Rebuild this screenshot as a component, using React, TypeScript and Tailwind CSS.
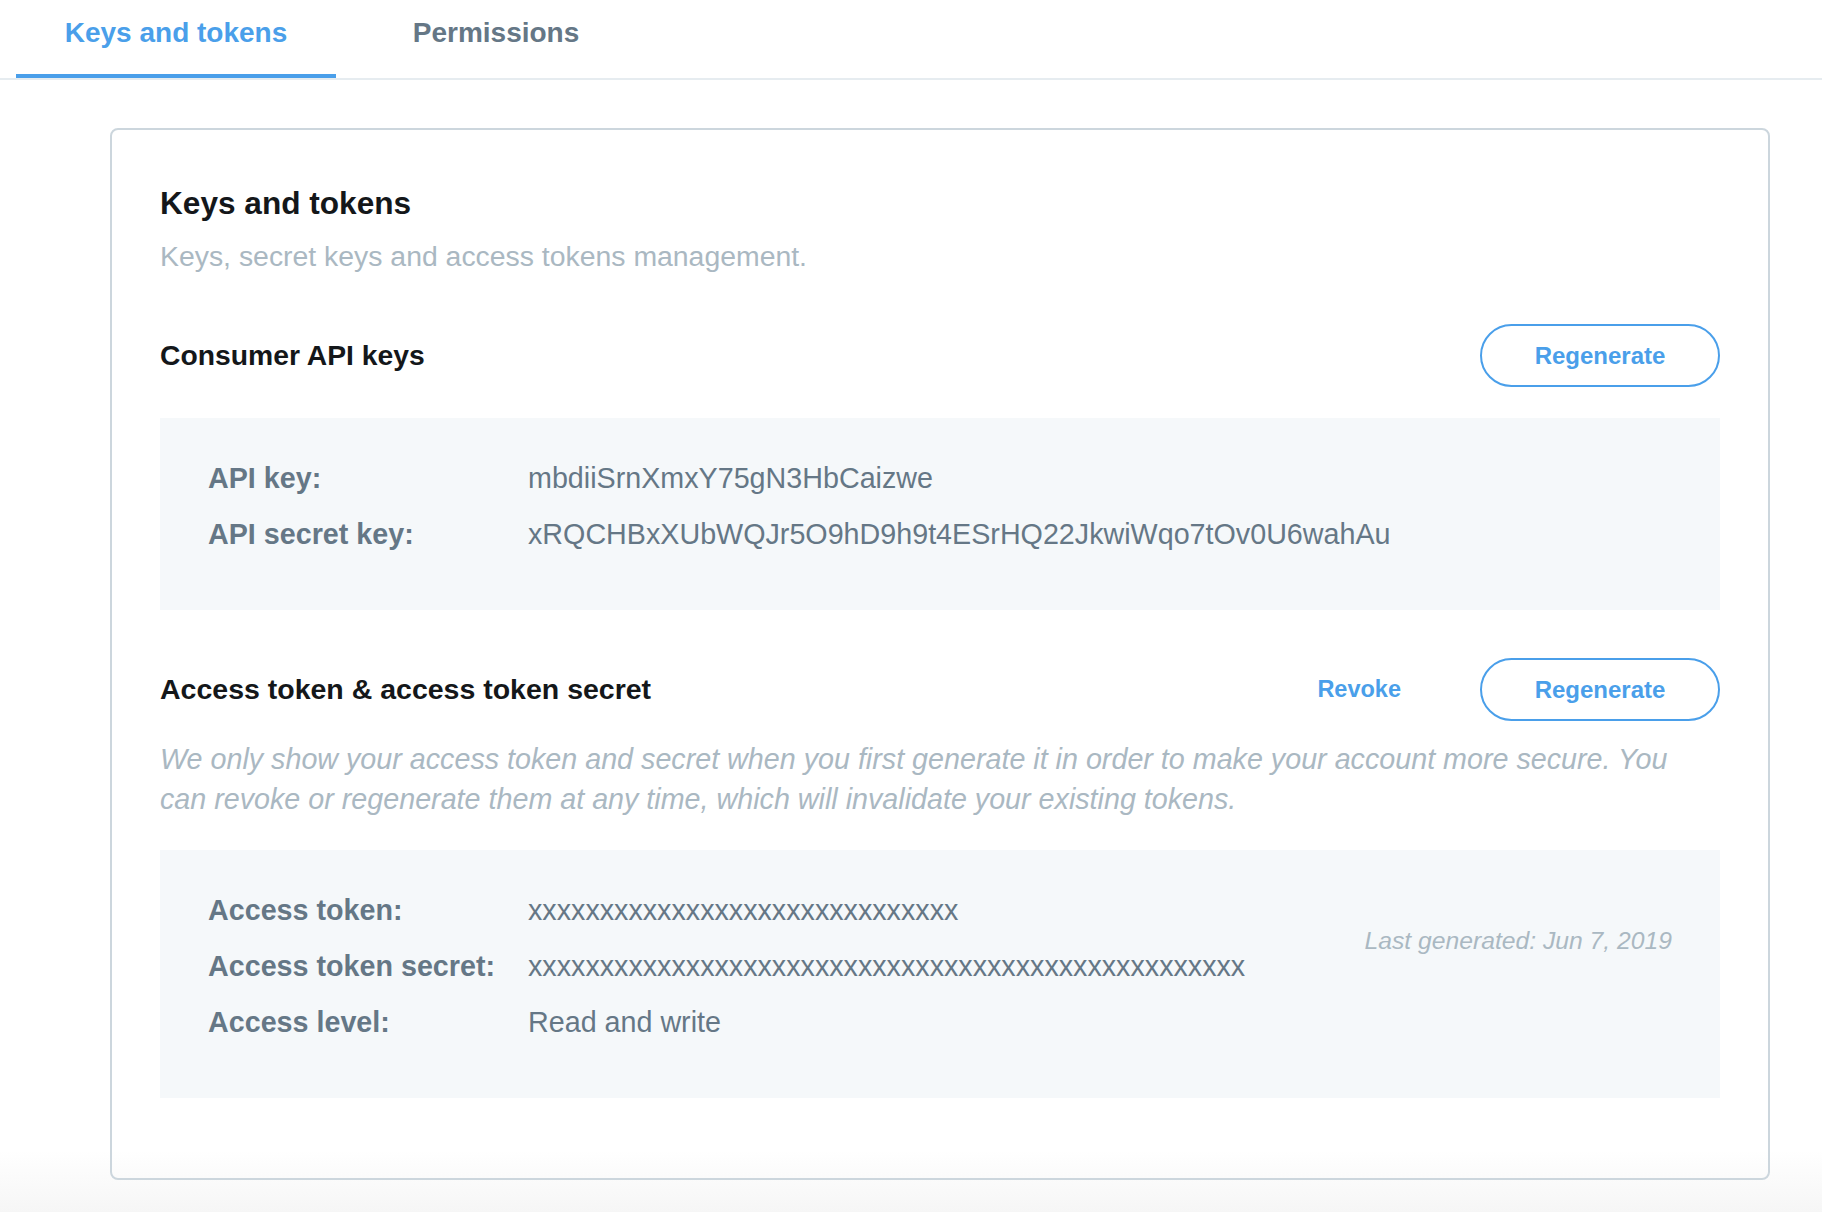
import React from "react";

const Row = ({ label, value }: { label: string; value: string }) => (
  <div className="flex h-[56px] items-center whitespace-nowrap text-[28.7px] leading-[56px] text-[#657786]">
    <div className="w-[320px] shrink-0 font-bold">{label}</div>
    <div>{value}</div>
  </div>
);

const RegenButton = () => (
  <button className="flex h-[63px] w-[240px] items-center justify-center rounded-full border-2 border-[#4a9fea] text-[24px] font-bold leading-none text-[#4a9fea]">
    Regenerate
  </button>
);

export default function App() {
  return (
    <div className="h-[1212px] w-[1822px] overflow-hidden bg-[linear-gradient(180deg,#ffffff_1150px,#f6f6f6_1212px)] font-['Liberation_Sans',Arial,sans-serif]">
      <div className="flex border-b-2 border-[#e6ecf0] pl-4">
        <div className="h-[78px] w-[320px] border-b-4 border-[#4a9fea] pt-[19px] text-center text-[28px] font-bold leading-none text-[#4a9fea]">
          Keys and tokens
        </div>
        <div className="h-[78px] w-[320px] pt-[19px] text-center text-[28px] font-bold leading-none text-[#657786]">
          Permissions
        </div>
      </div>

      <div className="ml-[110px] mt-[48px] w-[1660px] rounded-[8px] border-2 border-[#ccd6dd] px-[48px] pb-[80px] pt-[58px]">
        <h1 className="text-[31.6px] font-bold leading-none text-[#14171a]">Keys and tokens</h1>
        <p className="mt-[22px] text-[28.4px] leading-none text-[#aab8c2]">
          Keys, secret keys and access tokens management.
        </p>

        <div className="mt-[54px] flex h-[63px] items-center justify-between">
          <h2 className="text-[28.3px] font-bold leading-none text-[#14171a]">Consumer API keys</h2>
          <RegenButton />
        </div>

        <div className="mt-[31px] bg-[#f5f8fa] pb-[48px] pl-[48px] pr-[48px] pt-[32px]">
          <Row label="API key:" value="mbdiiSrnXmxY75gN3HbCaizwe" />
          <Row label="API secret key:" value="xRQCHBxXUbWQJr5O9hD9h9t4ESrHQ22JkwiWqo7tOv0U6wahAu" />
        </div>

        <div className="mt-[48px] flex h-[63px] items-center">
          <h2 className="flex-1 text-[28.5px] font-bold leading-none text-[#14171a]">
            Access token &amp; access token secret
          </h2>
          <button className="mr-[79px] text-[23.5px] font-bold leading-none text-[#4a9fea]">Revoke</button>
          <RegenButton />
        </div>

        <p className="mt-[18px] text-[28.7px] italic leading-[40px] text-[#aab8c2]">
          We only show your access token and secret when you first generate it in order to make your account more secure. You
          <br />
          can revoke or regenerate them at any time, which will invalidate your existing tokens.
        </p>

        <div className="mt-[31px] flex bg-[#f5f8fa] pb-[48px] pl-[48px] pr-[48px] pt-[32px]">
          <div className="flex-1">
            <Row label="Access token:" value="xxxxxxxxxxxxxxxxxxxxxxxxxxxxxx" />
            <Row label="Access token secret:" value="xxxxxxxxxxxxxxxxxxxxxxxxxxxxxxxxxxxxxxxxxxxxxxxxxx" />
            <Row label="Access level:" value="Read and write" />
          </div>
          <div className="whitespace-nowrap pt-[47px] text-[24.7px] italic leading-none text-[#aab8c2]">
            Last generated: Jun 7, 2019
          </div>
        </div>
      </div>
    </div>
  );
}
